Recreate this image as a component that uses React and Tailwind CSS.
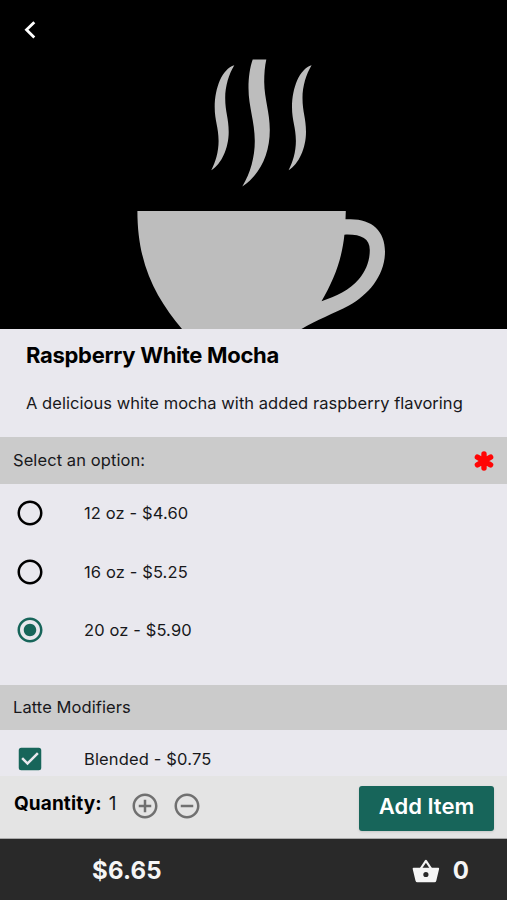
import { useState } from "react";
import {
    MdAddCircleOutline,
    MdCheckBox,
    MdCheckBoxOutlineBlank,
    MdRadioButtonChecked,
    MdRadioButtonUnchecked,
    MdRemoveCircleOutline,
} from "react-icons/md";

const sizes = [
    { id: "12", label: "12 oz - $4.60", price: 4.6 },
    { id: "16", label: "16 oz - $5.25", price: 5.25 },
    { id: "20", label: "20 oz - $5.90", price: 5.9 },
];

function CoffeeCup() {
    return (
        <svg viewBox="0 0 507 329" className="block h-full w-full" fill="#bdbdbd">
            {/* steam */}
            <path d="M234.3 65.3C222 69 214.8 88 214.7 107C214.7 121 218.6 127 218.6 141C218.6 152 215.5 162 211.3 170.3C221.5 164 228.7 148 228.7 132C228.7 118 225.2 112 225.2 98C225.2 86 229 74 234.3 65.3Z" />
            <path d="M252.7 59.5H266.3C264.8 66 264.2 74 264.2 82C264.4 99 269.8 112 269.8 130C269.8 154 260 175 242.3 186.5C250.5 173 254.8 157 254.8 141C254.8 121 248.5 107 248.5 88C248.5 77 250 67 252.7 59.5Z" />
            <path d="M311.6 65.3C299.3 69 292.1 88 292 107C292 121 295.9 127 295.9 141C295.9 152 292.8 162 288.6 170.3C298.8 164 306 148 306 132C306 118 302.5 112 302.5 98C302.5 86 306.3 74 311.6 65.3Z" />
            {/* cup and handle */}
            <path
                fillRule="evenodd"
                d="M137.4 211H345.8L345.5 219.2H350C372 219 385 231 385 251.5C385 275 369 294.5 349 305.5C334 313.5 316 320 301.5 329H182C157 299 137.4 266 137.4 211ZM344.4 234.7C342 259 334 280 321.5 301.2C336 296 349.5 290.5 359 279C366 270.5 369.8 261 369.8 250C369.8 238 360 234 344.4 234.7Z"
            />
        </svg>
    );
}

function Basket() {
    return (
        <svg viewBox="0 0 28 26" className="h-[26px] w-7" fill="none">
            <path d="M8.8 10.5L13.9 2.9L19 10.5" stroke="#f5f5f5" strokeWidth="2.2" strokeLinejoin="round" />
            <path
                fill="#f5f5f5"
                fillRule="evenodd"
                d="M1.6 9.8H26.2Q27.4 9.8 27.1 10.9L24.3 22.7Q23.9 24.3 22.5 24.3H5.3Q3.9 24.3 3.5 22.7L0.7 10.9Q0.4 9.8 1.6 9.8ZM13.9 13.9A2.6 2.6 0 1 0 13.9 19.1A2.6 2.6 0 1 0 13.9 13.9Z"
            />
        </svg>
    );
}

function RequiredMark() {
    return (
        <svg viewBox="0 0 20 20" className="size-5" stroke="#ff0505" strokeWidth="5.4" strokeLinecap="round">
            <path d="M10 3V17M3.4 6.2L16.6 13.8M16.6 6.2L3.4 13.8" />
        </svg>
    );
}

function SectionHeader({ title, className, required }) {
    return (
        <div className={`flex items-center justify-between bg-[#cbcbcb] px-[13px] ${className}`}>
            <span className="pb-px text-[16.5px] tracking-[0.08px]">{title}</span>
            {required && <RequiredMark />}
        </div>
    );
}

export default function App() {
    const [size, setSize] = useState("20");
    const [blended, setBlended] = useState(true);
    const [quantity, setQuantity] = useState(1);

    const base = sizes.find((s) => s.id === size).price;
    const total = (base + (blended ? 0.75 : 0)) * quantity;

    return (
        <div className="flex h-[900px] w-[507px] flex-col overflow-hidden bg-[#e9e8ee] font-['Inter',sans-serif] text-[#18181b]">
            <div className="relative h-[329px] shrink-0 bg-black">
                <CoffeeCup />
                <button className="absolute top-[20px] left-[22px]" aria-label="Back">
                    <svg viewBox="0 0 16 20" className="h-5 w-4" fill="none" stroke="white" strokeWidth="2.8">
                        <path d="M12.3 2.2L4.5 9.8L12.3 17.4" />
                    </svg>
                </button>
            </div>

            <div className="h-[108px] shrink-0 px-[26px] pt-3">
                <h1 className="text-[22px] leading-7 font-bold tracking-[-0.3px] text-black">Raspberry White Mocha</h1>
                <p className="mt-[22px] text-[16.5px] leading-6 tracking-[0.04px] whitespace-nowrap">
                    A delicious white mocha with added raspberry flavoring
                </p>
            </div>

            <SectionHeader title="Select an option:" className="h-[47px] shrink-0" required />
            <div className="h-[201px] shrink-0">
                {sizes.map((s) => (
                    <button key={s.id} className="flex h-[58.5px] w-full items-center pl-[15px]" onClick={() => setSize(s.id)}>
                        {size === s.id ? (
                            <MdRadioButtonChecked className="size-[30px] text-[#17655a]" />
                        ) : (
                            <MdRadioButtonUnchecked className="size-[30px] text-black" />
                        )}
                        <span className="ml-[39px] pt-px text-[16.5px] tracking-[0.12px]">{s.label}</span>
                    </button>
                ))}
            </div>

            <SectionHeader title="Latte Modifiers" className="h-[45px] shrink-0" />
            <button className="flex h-[46px] w-full shrink-0 items-center pt-[12px] pl-[15px]" onClick={() => setBlended(!blended)}>
                {blended ? (
                    <MdCheckBox className="size-[30px] text-[#17655a]" />
                ) : (
                    <MdCheckBoxOutlineBlank className="size-[30px]" />
                )}
                <span className="ml-[39px] text-[16.5px] tracking-[0.15px]">Blended - $0.75</span>
            </button>

            <div className="flex h-[63px] shrink-0 justify-between border-b border-[#aaa] bg-[#e4e4e4] pr-[13px] pl-[14px]">
                <div className="flex pt-[15px]">
                    <span className="text-[19px] leading-[26px] font-bold tracking-[0.1px] text-black">Quantity:</span>
                    <span className="ml-[7px] w-[9px] text-[19px] leading-[26px]">{quantity}</span>
                    <button className="ml-3 h-[30px]" onClick={() => setQuantity(quantity + 1)}>
                        <MdAddCircleOutline className="size-[30px] text-[#707070]" />
                    </button>
                    <button className="ml-3 h-[30px]" onClick={() => setQuantity(Math.max(1, quantity - 1))}>
                        <MdRemoveCircleOutline className="size-[30px] text-[#707070]" />
                    </button>
                </div>
                <button className="mt-[10px] h-[45px] w-[135px] rounded-[3px] bg-[#17655a] pb-1 text-[22px] font-semibold text-white shadow-sm">
                    Add Item
                </button>
            </div>

            <div className="flex h-[61px] shrink-0 items-center justify-between bg-[#292929] pt-0.5 pr-[38px] pl-[92px] text-2xl font-bold text-[#f5f5f5]">
                <span className="pt-px tracking-[0.2px]">${total.toFixed(2)}</span>
                <span className="flex items-center gap-[13px]">
                    <Basket />
                    <span className="pt-px">0</span>
                </span>
            </div>
        </div>
    );
}
